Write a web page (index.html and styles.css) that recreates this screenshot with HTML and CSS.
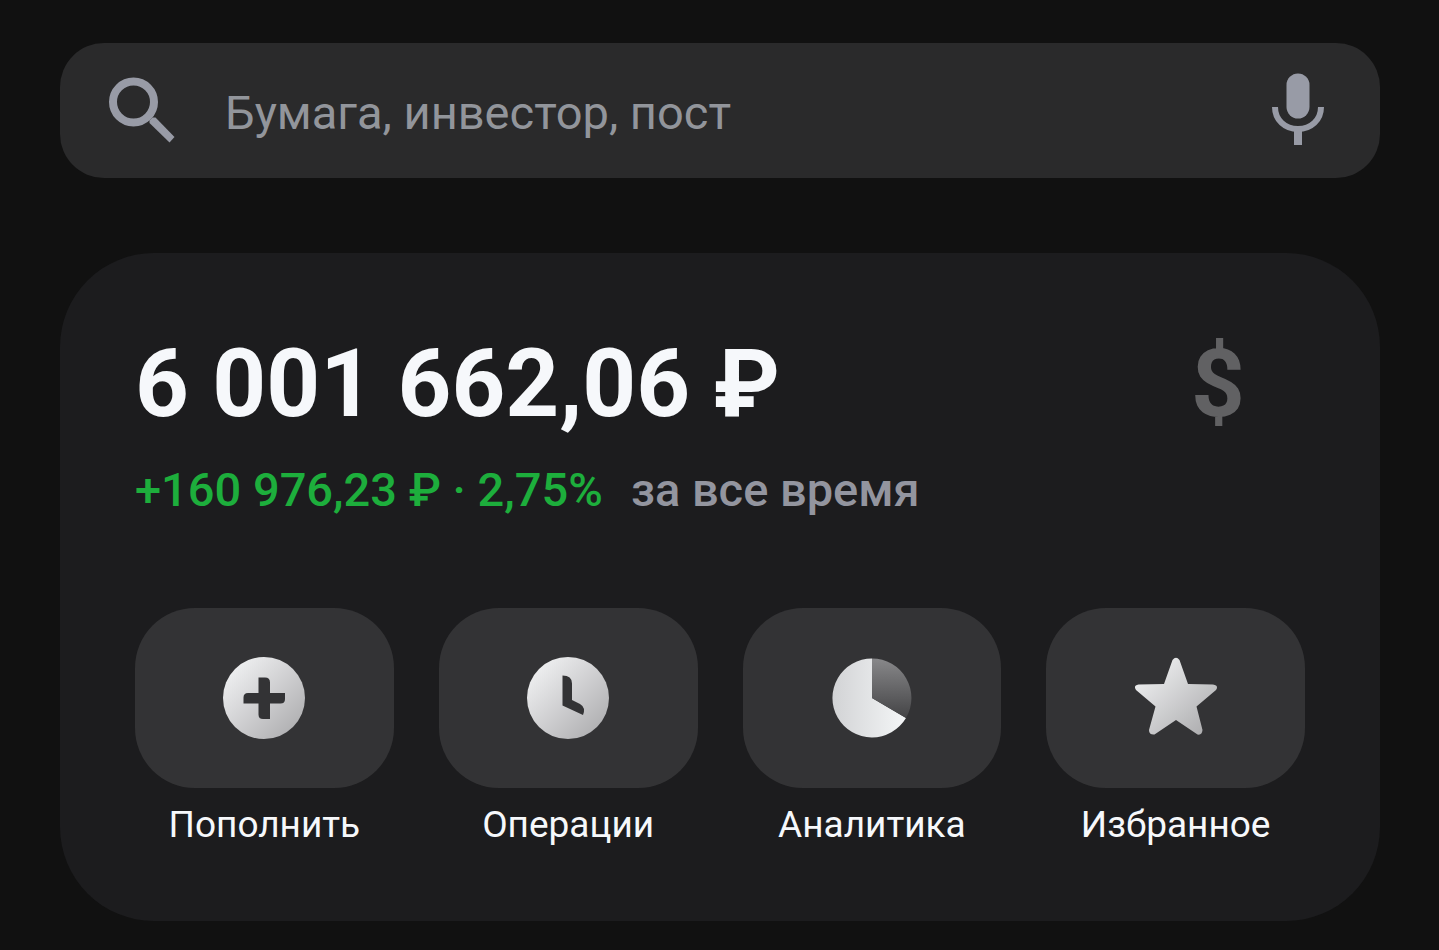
FILE: index.html
```html
<!DOCTYPE html>
<html lang="ru">
<head>
    <meta charset="UTF-8">
    <meta name="viewport" content="width=device-width, initial-scale=1.0">
    <title>Портфель</title>
    <link rel="stylesheet" href="styles.css">
</head>
<body>

    <!-- Search -->
    <form class="search" role="search">
        <svg class="search-icon" viewBox="0 0 72 72" aria-hidden="true">
            <circle cx="27.500" cy="27" r="20.5" fill="none" stroke="#989ba6" stroke-width="8"/>
            <path d="M43.500 48V45.500L46.500 42.500H49.500L68.500 62L63.500 67.500Z" fill="#989ba6"/>
        </svg>
        <input class="search-input" type="text" placeholder="Бумага, инвестор, пост" aria-label="Поиск">
        <button class="mic" type="button" aria-label="Голосовой поиск">
            <svg viewBox="0 0 56 76" aria-hidden="true">
                <rect x="16.500" y="0.5" width="23" height="45" rx="11.5" fill="#989ba6"/>
                <path d="M5 34C5 47 15 56 28 56S51 47 51 34" fill="none" stroke="#989ba6" stroke-width="6"/>
                <path d="M24 56H32V72H24Z" fill="#989ba6"/>
            </svg>
        </button>
    </form>

    <!-- Portfolio card -->
    <main class="card">
        <div class="total">
            <h1 class="balance">6 001 662,06 ₽</h1>
            <button class="currency" type="button" aria-label="Показать в долларах">$</button>
        </div>
        <p class="profit"><span class="gain">+160 976,23 ₽ · 2,75%</span><span class="period">за все время</span></p>

        <div class="actions">
            <button class="action" type="button">
                <span class="tile">
                    <svg class="icon" viewBox="0 0 84 84" aria-hidden="true">
                        <defs>
                            <linearGradient id="silver" x1="0" y1="0" x2="1" y2="1">
                                <stop offset="0.1" stop-color="#f0f1f2"/>
                                <stop offset="0.9" stop-color="#afafb1"/>
                            </linearGradient>
                        </defs>
                        <circle cx="42" cy="42" r="41" fill="url(#silver)"/>
                        <path d="M36.500 21.500H43Q48 21.500 48 26.500V37H63V43Q63 47.500 58.500 47.500H48V63H41Q36.500 63 36.500 58.500V47.500H21.500V41.500Q21.500 37 26 37H36.500Z" fill="#333335"/>
                    </svg>
                </span>
                <span class="label">Пополнить</span>
            </button>
            <button class="action" type="button">
                <span class="tile">
                    <svg class="icon" viewBox="0 0 84 84" aria-hidden="true">
                        <circle cx="42" cy="42" r="41" fill="url(#silver)"/>
                        <path d="M36.500 19.500Q46 19.500 46 27.500V44L54 48Q60 51.500 57 59L36.500 49.500Z" fill="#333335"/>
                    </svg>
                </span>
                <span class="label">Операции</span>
            </button>
            <button class="action" type="button">
                <span class="tile">
                    <svg class="icon" viewBox="0 0 84 84" aria-hidden="true">
                        <defs>
                            <linearGradient id="pie" x1="0" y1="0" x2="1" y2="0">
                                <stop offset="0" stop-color="#d2d3d5"/>
                                <stop offset="1" stop-color="#f4f6f7"/>
                            </linearGradient>
                            <linearGradient id="slice" x1="0" y1="0" x2="0" y2="1">
                                <stop offset="0" stop-color="#88888a"/>
                                <stop offset="1" stop-color="#444446"/>
                            </linearGradient>
                        </defs>
                        <path d="M42 42V2.500A39.500 39.500 0 1 0 76 62Z" fill="url(#pie)"/>
                        <path d="M42 42V2.500A39.500 39.500 0 0 1 76 62Z" fill="url(#slice)"/>
                    </svg>
                </span>
                <span class="label">Аналитика</span>
            </button>
            <button class="action" type="button">
                <span class="tile">
                    <svg class="icon" viewBox="0 0 84 84" aria-hidden="true">
                        <path d="M38.500 4Q42 -0.500 45.500 4L54 28L79 28.500Q85 29.500 82 34L62.500 50.500L68.500 74Q68 79.500 63.500 78.500L42 64L20.500 78.500Q15 79 15 74L21.500 50.500L2 34Q-1 29.500 4.500 28.500L30 28Z" fill="url(#silver)"/>
                    </svg>
                </span>
                <span class="label">Избранное</span>
            </button>
        </div>
    </main>

</body>
</html>
```
FILE: styles.css
```css
* { box-sizing: border-box; }

body {
    margin: 0;
    padding: 43px 59px 28px 60px;
    background: #111111;
    color: #f6f8fb;
    font-family: Roboto, "Noto Sans", sans-serif;
}

button {
    padding: 0;
    border: none;
    background: none;
    color: inherit;
    font: inherit;
    cursor: pointer;
}

svg { display: block; }

/* search */
.search {
    display: flex;
    align-items: center;
    height: 135px;
    padding: 0 54px 0 46px;
    border-radius: 44px;
    background: #2a2a2b;
}
.search-icon {
    flex: none;
    width: 72px;
    height: 72px;
}
.search-input {
    flex: 1;
    min-width: 0;
    height: 72px;
    margin: 0 24px 0 47px;
    padding: 4px 0 0;
    border: none;
    outline: none;
    background: none;
    color: #f6f8fb;
    font: 400 47px/56px Roboto, "Noto Sans", sans-serif;
}
.search-input::placeholder { color: #92959b; opacity: 1; }
.mic svg {
    width: 56px;
    height: 76px;
}

/* card */
.card {
    margin-top: 75px;
    padding: 76px 75px 74px;
    border-radius: 94px;
    background: #1c1c1e;
}
.total {
    display: flex;
    justify-content: space-between;
    align-items: center;
    padding-right: 60px;
}
.balance {
    margin: 0;
    font-size: 94px;
    line-height: 110px;
    font-weight: 700;
}
.currency {
    color: #616163;
    font-size: 94px;
    line-height: 110px;
    font-weight: 700;
}
.profit {
    margin: 23px 0 0;
    font-size: 47px;
    line-height: 56px;
    font-weight: 500;
}
.gain { color: #1dae3c; }
.period {
    margin-left: 28px;
    color: #93959f;
}

/* actions */
.actions {
    display: grid;
    grid-template-columns: repeat(4, 1fr);
    gap: 45px;
    margin-top: 90px;
}
.action {
    display: flex;
    flex-direction: column;
    gap: 15px;
}
.tile {
    display: flex;
    justify-content: center;
    align-items: center;
    width: 100%;
    height: 180px;
    border-radius: 60px;
    background: #333335;
}
.icon {
    width: 84px;
    height: 84px;
}
.label {
    width: 100%;
    font-size: 37px;
    line-height: 44px;
    text-align: center;
}
```
